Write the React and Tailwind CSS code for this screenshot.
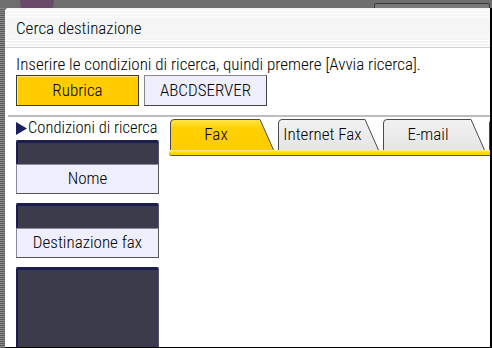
import React from "react";

const font = { fontFamily: '"Liberation Sans Narrow", "Roboto Condensed", "Liberation Sans", sans-serif', fontWeight: 300 };

function Tab({ label, active, width = 104 }) {
  const h = 31;
  const slant = 13;
  const w = width;
  const d = `M0.5 ${h} L0.5 4 Q0.5 0.5 4 0.5 L${w - slant - 1} 0.5 L${w - 0.5} ${h}`;
  return (
    <div className="relative shrink-0" style={{ width: w, height: h }}>
      <svg className="absolute inset-0" width={w} height={h} viewBox={`0 0 ${w} ${h}`}>
        <defs>
          <linearGradient id="tabY" x1="0" y1="0" x2="0" y2="1">
            <stop offset="0" stopColor="#ffe44d" />
            <stop offset="0.3" stopColor="#ffd000" />
            <stop offset="1" stopColor="#ffcc00" />
          </linearGradient>
          <linearGradient id="tabG" x1="0" y1="0" x2="0" y2="1">
            <stop offset="0" stopColor="#f2f2f2" />
            <stop offset="1" stopColor="#e4e4e4" />
          </linearGradient>
        </defs>
        <path d={d + " Z"} fill={active ? "url(#tabY)" : "url(#tabG)"} stroke="none" />
        <path d={d} fill="none" stroke="#4a4a4a" strokeWidth="1" />
      </svg>
      <div className="relative flex h-full items-center justify-center pr-3 text-[17px] text-black" style={font}>
        {label}
      </div>
    </div>
  );
}

function DarkBox({ h, grow }) {
  return (
    <div
      className={`w-[143px] shrink-0 rounded-t-[2px] border-t-[3px] border-l-[2px] border-r border-t-[#1c1f4e] border-l-[#1c1f4e] border-r-[#50506a] bg-[#3b3b4b] ${grow ? "flex-1" : ""}`}
      style={grow ? undefined : { height: h }}
    />
  );
}

function LavButton({ label, h = 30 }) {
  return (
    <div
      className="flex w-[143px] shrink-0 items-center justify-center whitespace-nowrap border border-[#8a8a9a] border-b-[#555] border-r-[#555] bg-[#eeeefc] text-[17px] text-black"
      style={{ ...font, height: h }}
    >
      {label}
    </div>
  );
}

export default function App() {
  return (
    <div className="relative flex h-[348px] w-[492px] flex-col overflow-hidden bg-[#6e6e6e]">
      {/* decorative top bits */}
      <div className="absolute left-[20px] top-[-22px] h-[40px] w-[34px] rounded-full bg-[#6a4a68]" />
      <div className="absolute left-[374px] top-[3px] h-[10px] w-[116px] rounded-t-[2px] border border-[#3a3a3a] bg-[#7a7a7a]" />
      <div className="h-[8px] shrink-0" />
      <div className="flex min-h-0 flex-1">
        <div className="w-[5px] shrink-0 bg-[repeating-linear-gradient(0deg,#5a5a5a_0px,#5a5a5a_1px,#8a8a8a_1px,#8a8a8a_2px)]" />
        <div className="relative flex min-w-0 flex-1 flex-col rounded-tl-[4px] border-r-[2px] border-b border-black bg-white">
          {/* title bar */}
          <div className="flex h-[39px] shrink-0 items-center rounded-tl-[4px] bg-[linear-gradient(#ffffff_0px,#ececec_1px,#ffffff_2px,#ffffff_3px,#ececec_4px,#ffffff_5px,#ffffff_6px,#ececec_7px,#ffffff_8px,#f5f5f5_10px,#f5f5f5_29px,#ffffff_30px,#e8e8e8_31px,#ffffff_32px,#ffffff_33px,#e8e8e8_34px,#ffffff_35px,#ffffff_36px,#e4e4e4_37px,#ffffff_38px)] pl-[11px] pt-[2px] text-[17px] text-black" style={font}>
            Cerca destinazione
          </div>
          <div className="h-px shrink-0 bg-[#cfcfcf]" />
          <div className="flex shrink-0 flex-col pl-[11px]">
            <div className="mt-[6px] h-[20px] whitespace-nowrap text-[17px] leading-[20px] text-black" style={font}>
              Inserire le condizioni di ricerca, quindi premere [Avvia ricerca].
            </div>
            <div className="mt-[1px] flex gap-[5px]">
              <div
                className="flex h-[31px] w-[123px] items-center justify-center border border-[#3a3a3a] bg-[#ffcc00] text-[17px] text-black shadow-[inset_1px_1px_0_#ffe680]"
                style={font}
              >
                Rubrica
              </div>
              <div
                className="flex h-[31px] w-[123px] items-center justify-center border border-[#888] border-b-[#444] border-r-[#444] bg-[#eeeefc] text-[17px] text-black"
                style={font}
              >
                ABCDSERVER
              </div>
            </div>
          </div>
          <div className="ml-[3px] mt-[9px] h-[2px] shrink-0 bg-[#bdbdbd]" />
          <div className="flex min-h-0 flex-1 pl-[11px] pt-[2px]">
            <div className="flex w-[143px] shrink-0 flex-col">
              <div className="flex h-[19px] shrink-0 items-center gap-[1px] whitespace-nowrap text-[16.5px] leading-none text-black" style={font}>
                <svg width="11" height="13" viewBox="0 0 11 13" className="shrink-0">
                  <path d="M0 0 L11 6.5 L0 13 Z" fill="#1c1f5e" />
                </svg>
                <span>Condizioni di ricerca</span>
              </div>
              <div className="mt-[2px] flex shrink-0"><DarkBox h={24} /></div>
              <LavButton label="Nome" h={30} />
              <div className="mt-[9px] flex shrink-0"><DarkBox h={25} /></div>
              <LavButton label="Destinazione fax" h={30} />
              <div className="mt-[9px] flex min-h-0 flex-1 flex-col"><DarkBox grow /></div>
            </div>
            <div className="ml-[10px] flex min-w-0 flex-1 flex-col overflow-hidden">
              <div className="flex gap-[4px] pl-[1px]">
                <Tab label="Fax" active width={104} />
                <Tab label="Internet Fax" width={101} />
                <Tab label="E-mail" width={102} />
                <Tab label="" width={40} />
              </div>
              <div className="h-[6px] shrink-0 rounded-l-[3px] border-b border-[#555] bg-[linear-gradient(#fff3a0_0px,#ffe000_2px,#ffcc00_5px)]" />
            </div>
          </div>
        </div>
      </div>
    </div>
  );
}
